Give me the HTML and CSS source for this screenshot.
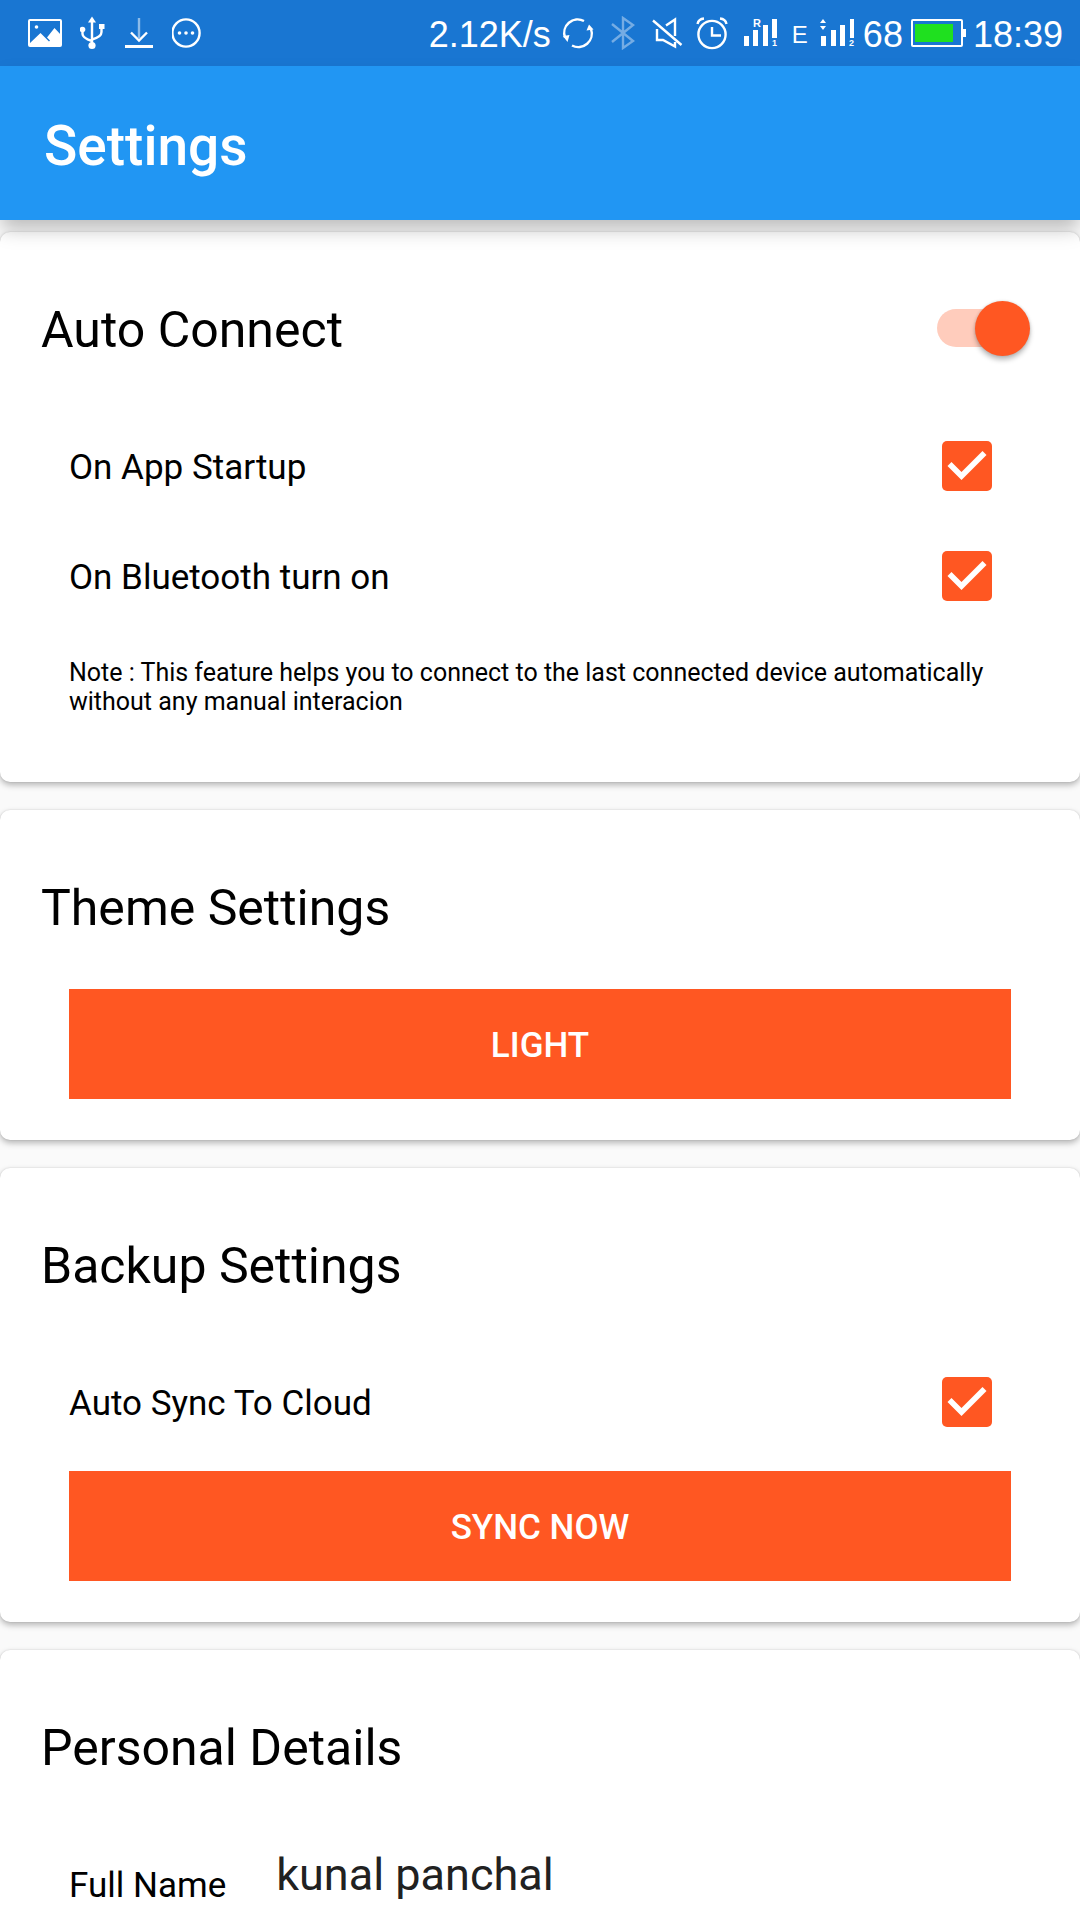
FILE: index.html
```html
<!DOCTYPE html>
<html lang="en">
<head>
<meta charset="utf-8">
<meta name="viewport" content="width=device-width">
<title>Settings</title>
<link rel="stylesheet" href="styles.css">
</head>
<body>
<div class="app">
  <div class="status-bar">
    <div class="status-notifications">
      <svg class="icon" width="34" height="34" viewBox="28 16 34 34" aria-hidden="true">
        <rect x="29" y="20" width="32" height="26" rx="1" fill="none" stroke="#fff" stroke-width="2"/>
        <circle cx="36.500" cy="27" r="1.800" fill="#fff"/>
        <path d="M29 44 L40.500 33 L49 41.500 L50 40.500 L47 37.500 L54.500 28 L61 35 V46 H29z" fill="#fff"/>
      </svg>
      <svg class="icon" width="27" height="34" viewBox="80 16 27 34" aria-hidden="true">
        <path d="M92 46V20M82.500 30V34Q82.500 38 92 41M101.500 28V32Q101.500 37 92 39.500" fill="none" stroke="#fff" stroke-width="2.400"/>
        <path d="M92 16.500L96 22.500H88z" fill="#fff"/>
        <circle cx="82.500" cy="29.500" r="2.800" fill="#fff"/>
        <rect x="99" y="24" width="5.500" height="5" fill="#fff"/>
        <circle cx="92" cy="45.500" r="3.600" fill="#fff"/>
      </svg>
      <svg class="icon" width="29" height="34" viewBox="125 16 29 34" aria-hidden="true">
        <path d="M139 18V38" stroke="#fff" stroke-opacity=".5" stroke-width="2.400"/>
        <path d="M131 32.500L139 40.500L147 32.500" fill="none" stroke="#fff" stroke-width="2.400"/>
        <path d="M125 46.500H153" stroke="#fff" stroke-width="3"/>
      </svg>
      <svg class="icon" width="30" height="34" viewBox="172 16 30 34" aria-hidden="true">
        <circle cx="186" cy="33" r="13.600" fill="none" stroke="#fff" stroke-width="2.400"/>
        <g fill="#fff"><circle cx="179.500" cy="33" r="1.800"/><circle cx="186" cy="33" r="1.800"/><circle cx="192.500" cy="33" r="1.800"/></g>
      </svg>
    </div>
    <div class="status-system">
      <span>2.12K/s</span>
      <svg class="icon" width="44" height="34" viewBox="556 16 44 34" aria-hidden="true">
        <path d="M564 37.500A13.500 13.500 0 0 1 583 21M571 45.500A13.500 13.500 0 0 0 590 29" fill="none" stroke="#fff" stroke-width="2.400"/>
        <path d="M585.500 30.500L588 24.500L592.500 29.500z" fill="#fff"/>
        <path d="M562 36L568.500 35L566.500 42z" fill="#fff"/>
      </svg>
      <svg class="icon" width="38" height="34" viewBox="606 16 38 34" aria-hidden="true">
        <path d="M611 24L632 41L622 48V18L632 25L611 42" fill="none" stroke="#fff" stroke-opacity=".4" stroke-width="2.400"/>
      </svg>
      <svg class="icon" width="37" height="34" viewBox="650 16 37 34" aria-hidden="true">
        <path d="M652 20.500L680.500 45M656 29V40H662L674 46.500V42M665 25.500L674 19.500V36" fill="none" stroke="#fff" stroke-width="2.400"/>
      </svg>
      <svg class="icon" width="42" height="34" viewBox="693 16 42 34" aria-hidden="true">
        <circle cx="711" cy="34.500" r="13.600" fill="none" stroke="#fff" stroke-width="2.400"/>
        <path d="M711 27V35.500H720M696.500 24Q697.500 19 703 18.500M725.500 24Q724.500 19 719 18.500" fill="none" stroke="#fff" stroke-width="2.400"/>
      </svg>
      <svg class="icon" width="44" height="34" viewBox="741 16 44 34" aria-hidden="true">
        <path d="M743 36h5v10h-5zM752 30h5v16h-5zM762 25h5v21h-5zM771 19h5v19h-5z" fill="#fff"/>
        <text class="icon-text" x="752" y="27" font-size="11">R</text>
        <text class="icon-text" x="771" y="46" font-size="9">1</text>
      </svg>
      <span class="network-type">E</span>
      <svg class="icon" width="43" height="34" viewBox="813 16 43 34" aria-hidden="true">
        <path d="M820 36h5v10h-5zM830 30h5v16h-5zM839 25h5v21h-5zM849 19h4v19h-4zM819 23l3-4 3 4zM819 26h6l-3 4z" fill="#fff"/>
        <text class="icon-text" x="848" y="46" font-size="9">2</text>
      </svg>
      <span>68</span>
      <svg class="icon" width="58" height="34" viewBox="908 16 58 34" aria-hidden="true">
        <rect x="911" y="20" width="50" height="26" rx="1" fill="none" stroke="#fff" stroke-width="2"/>
        <rect x="914" y="24" width="38" height="18" fill="#1fe01f"/>
        <rect x="962" y="29" width="3" height="8" fill="#fff"/>
      </svg>
      <span>18:39</span>
    </div>
  </div>

  <header class="app-bar">
    <h1 class="app-title">Settings</h1>
  </header>

  <main class="content">
    <section class="card">
      <div class="card-header">
        <h2 class="card-title"><label for="auto-connect">Auto Connect</label></h2>
        <input class="switch" id="auto-connect" type="checkbox" role="switch" checked>
      </div>
      <div class="card-body">
        <div class="option">
          <label class="option-label" for="on-startup">On App Startup</label>
          <input class="checkbox" id="on-startup" type="checkbox" checked>
        </div>
        <div class="option">
          <label class="option-label" for="on-bluetooth">On Bluetooth turn on</label>
          <input class="checkbox" id="on-bluetooth" type="checkbox" checked>
        </div>
        <p class="note">Note : This feature helps you to connect to the last connected device automatically without any manual interacion</p>
      </div>
    </section>

    <section class="card">
      <div class="card-header">
        <h2 class="card-title">Theme Settings</h2>
      </div>
      <div class="card-body">
        <button class="button" type="button">LIGHT</button>
      </div>
    </section>

    <section class="card">
      <div class="card-header">
        <h2 class="card-title">Backup Settings</h2>
      </div>
      <div class="card-body">
        <div class="option">
          <label class="option-label" for="auto-sync">Auto Sync To Cloud</label>
          <input class="checkbox" id="auto-sync" type="checkbox" checked>
        </div>
        <button class="button button-after-option" type="button">SYNC NOW</button>
      </div>
    </section>

    <section class="card">
      <div class="card-header">
        <h2 class="card-title">Personal Details</h2>
      </div>
      <div class="card-body">
        <div class="field">
          <label class="option-label" for="full-name">Full Name</label>
          <input class="text-input" id="full-name" type="text" value="kunal panchal">
        </div>
      </div>
    </section>
  </main>
</div>
</body>
</html>
```

FILE: styles.css
```css
:root {
  --primary: #2196f3;
  --primary-dark: #1976d2;
  --accent: #ff5722;
}

* {
  box-sizing: border-box;
}

body {
  margin: 0;
  background: #fafafa;
  color: #000;
  font-family: Roboto, sans-serif;
  font-size: 35px;
}

.app {
  display: flex;
  flex-direction: column;
  height: 100vh;
}

/* Status bar */
.status-bar {
  display: flex;
  flex: none;
  align-items: center;
  justify-content: space-between;
  height: 66px;
  padding: 0 17px 0 28px;
  background: var(--primary-dark);
  color: #fff;
  font-family: "Liberation Sans", sans-serif;
  font-size: 36px;
  line-height: 42px;
}

.status-notifications,
.status-system {
  display: flex;
  align-items: center;
}

.status-notifications {
  gap: 18px;
}

.status-system {
  gap: 6px;
}

.status-system span {
  padding-top: 3px;
}

.icon {
  display: block;
  flex: none;
}

.icon-text {
  fill: #fff;
  font-weight: 700;
}

.network-type {
  font-size: 24px;
}

/* App bar */
.app-bar {
  position: relative;
  z-index: 1;
  display: flex;
  flex: none;
  align-items: center;
  height: 154px;
  padding: 6px 44px 0;
  background: var(--primary);
  color: #fff;
  box-shadow: 0 11px 18px -2px rgba(0, 0, 0, 0.25);
}

.app-title {
  margin: 0;
  font-size: 55px;
  font-weight: 500;
  line-height: 64px;
}

/* Cards */
.content {
  display: flex;
  flex: 1;
  flex-direction: column;
  gap: 28px;
  min-height: 0;
  padding: 12px 0;
  overflow-y: auto;
  scrollbar-width: none;
}

.card {
  flex: none;
  padding: 41px 0;
  border-radius: 10px;
  background: #fff;
  box-shadow: 0 3px 6px rgba(0, 0, 0, 0.28), 0 0 2px rgba(0, 0, 0, 0.14);
}

.card-header {
  display: flex;
  align-items: center;
  justify-content: space-between;
  height: 110px;
  margin-bottom: 28px;
  padding: 0 50px 0 41px;
}

.card-title {
  margin: 0;
  padding-top: 3px;
  font-size: 50px;
  font-weight: 400;
  line-height: 60px;
}

.card-body {
  padding: 0 69px;
}

.option {
  display: flex;
  align-items: center;
  justify-content: space-between;
  height: 110px;
  padding-right: 19px;
}

.option-label {
  padding-top: 2px;
}

.note {
  margin: 27px 0 25px;
  font-size: 25px;
  line-height: 29px;
}

/* Controls */
.checkbox {
  display: block;
  width: 50px;
  height: 50px;
  margin: 0;
  border: 2px solid #757575;
  border-radius: 5px;
  appearance: none;
}

.checkbox:checked {
  border: 0;
  background: var(--accent);
}

.checkbox:checked::before {
  display: block;
  width: 100%;
  height: 100%;
  background: #fff;
  clip-path: polygon(39% 78%, 11% 50%, 19% 42%, 39% 62%, 81% 20%, 89% 28%);
  content: "";
}

.switch {
  display: grid;
  align-items: center;
  width: 93px;
  height: 56px;
  margin: 0;
  appearance: none;
}

.switch::before,
.switch::after {
  grid-area: 1 / 1;
  content: "";
}

.switch::before {
  width: 84px;
  height: 38px;
  border-radius: 19px;
  background: #bdbdbd;
}

.switch::after {
  width: 55px;
  height: 55px;
  border-radius: 50%;
  background: #fafafa;
  box-shadow: 0 4px 5px rgba(0, 0, 0, 0.25), 0 0 3px rgba(0, 0, 0, 0.15);
}

.switch:checked::before {
  background: #ffccbc;
}

.switch:checked::after {
  justify-self: end;
  background: var(--accent);
}

.button {
  display: block;
  width: 100%;
  height: 110px;
  padding: 2px 0 0;
  border: 0;
  background: var(--accent);
  color: #fff;
  font-family: inherit;
  font-size: 35px;
  font-weight: 500;
}

.button-after-option {
  margin-top: 14px;
}

.field {
  display: flex;
  align-items: center;
  gap: 50px;
  height: 110px;
}

.text-input {
  flex: 1;
  align-self: flex-start;
  min-width: 0;
  height: 90px;
  padding: 0;
  border: 0;
  outline: 0;
  background: none;
  color: #212121;
  font-family: inherit;
  font-size: 45px;
}
```
